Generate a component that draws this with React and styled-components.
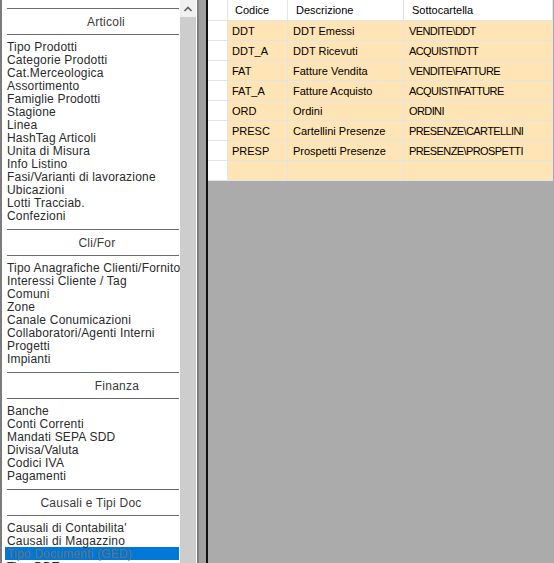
import React from 'react';
import styled, { createGlobalStyle } from 'styled-components';

const GlobalStyle = createGlobalStyle`
    html, body {
        margin: 0;
        padding: 0;
        overflow: hidden;
        background: #ababab;
    }
    body {
        font-family: "Liberation Sans", Arial, sans-serif;
    }
`;

const Window = styled.div`
    display: flex;
    width: 554px;
    height: 563px;
    overflow: hidden;
`;

const Sidebar = styled.div`
    width: 180px;
    flex-shrink: 0;
    box-sizing: border-box;
    background: #fff;
    border-left: 2px solid #7c7c7c;
    padding: 1px 1px 0 5px;
    overflow: hidden;
`;

const SectionHead = styled.div`
    margin-top: 7px;
    margin-bottom: 5px;
    height: 25px;
    border-top: 1px solid #6a6a6a;
    border-bottom: 1px solid #6a6a6a;
    display: flex;
    align-items: center;
    justify-content: center;
    padding-left: ${p => Math.max(p.shift, 0) * 2}px;
    padding-right: ${p => Math.max(-p.shift, 0) * 2}px;
    font-size: 12px;
    letter-spacing: 0.25px;
    color: #3a3a3a;
`;

const Item = styled.div`
    height: 13px;
    line-height: 14px;
    font-size: 12px;
    letter-spacing: 0.2px;
    white-space: nowrap;
    margin-left: -2px;
    padding-left: 2px;
    color: ${p => (p.selected ? '#6f6f6f' : '#2a2a2a')};
    background: ${p => (p.selected ? '#0078d7' : 'transparent')};
`;

const ScrollBar = styled.div`
    width: 16px;
    flex-shrink: 0;
    background: #cdcdcd;
`;

const ScrollButton = styled.div`
    height: 17px;
    background: #f0f0f0;
    display: flex;
    align-items: center;
    justify-content: center;
`;

const Splitter = styled.div`
    width: 12px;
    flex-shrink: 0;
    background: linear-gradient(
        to right,
        #fff 0 1px,
        #7e7e7e 1px 3px,
        #a0a0a0 3px 10px,
        #111 10px 12px
    );
`;

const GridArea = styled.div`
    flex: 1;
    background: #ababab;
    overflow: hidden;
`;

const Grid = styled.div`
    display: grid;
    grid-template-columns: 19px 59px 115px 148px;
    grid-template-rows: 20px repeat(8, 19px);
    gap: 1px;
    padding: 0 1px 1px 0;
    width: max-content;
    background: #e4e4e4;
`;

const HeadCell = styled.div`
    background: #fff;
    display: flex;
    align-items: center;
    padding-left: ${p => p.pad}px;
    font-size: 11px;
    color: #000;
`;

const IndicatorCell = styled.div`
    background: #fff;
`;

const Cell = styled.div`
    background: #ffe4b5;
    display: flex;
    align-items: center;
    padding-left: ${p => p.pad}px;
    font-size: 11px;
    letter-spacing: ${p => (p.narrow ? '-0.6px' : '0')};
    color: #000;
    white-space: nowrap;
    overflow: hidden;
`;

const sections = [
    {
        title: 'Articoli', shift: 13,
        items: ['Tipo Prodotti', 'Categorie Prodotti', 'Cat.Merceologica', 'Assortimento', 'Famiglie Prodotti',
            'Stagione', 'Linea', 'HashTag Articoli', 'Unita di Misura', 'Info Listino',
            'Fasi/Varianti di lavorazione', 'Ubicazioni', 'Lotti Tracciab.', 'Confezioni'],
    },
    {
        title: 'Cli/For', shift: 4,
        items: ['Tipo Anagrafiche Clienti/Fornitori', 'Interessi Cliente / Tag', 'Comuni', 'Zone',
            'Canale Conumicazioni', 'Collaboratori/Agenti Interni', 'Progetti', 'Impianti'],
    },
    {
        title: 'Finanza', shift: 24,
        items: ['Banche', 'Conti Correnti', 'Mandati SEPA SDD', 'Divisa/Valuta', 'Codici IVA', 'Pagamenti'],
    },
    {
        title: 'Causali e Tipi Doc', shift: -2,
        items: ["Causali di Contabilita'", 'Causali di Magazzino', 'Tipo Documenti (GED)', 'Tipo DDT'],
    },
];

const rows = [
    ['DDT', 'DDT Emessi', 'VENDITE\\DDT'],
    ['DDT_A', 'DDT Ricevuti', 'ACQUISTI\\DTT'],
    ['FAT', 'Fatture Vendita', 'VENDITE\\FATTURE'],
    ['FAT_A', 'Fatture Acquisto', 'ACQUISTI\\FATTURE'],
    ['ORD', 'Ordini', 'ORDINI'],
    ['PRESC', 'Cartellini Presenze', 'PRESENZE\\CARTELLINI'],
    ['PRESP', 'Prospetti Presenze', 'PRESENZE\\PROSPETTI'],
    ['', '', ''],
];

const App = () => {
    return (
        <>
            <GlobalStyle />
            <Window>
                <Sidebar>
                    {sections.map(sec => (
                        <div key={sec.title}>
                            <SectionHead shift={sec.shift}>{sec.title}</SectionHead>
                            {sec.items.map(it => (
                                <Item key={it} selected={it === 'Tipo Documenti (GED)'}>{it}</Item>
                            ))}
                        </div>
                    ))}
                </Sidebar>
                <ScrollBar>
                    <ScrollButton>
                        <svg width="16" height="17" viewBox="0 0 16 17">
                            <polyline points="4.5,11 8,7.5 11.5,11" fill="none" stroke="#606060" strokeWidth="1.6" />
                        </svg>
                    </ScrollButton>
                </ScrollBar>
                <Splitter />
                <GridArea>
                    <Grid>
                        <IndicatorCell />
                        <HeadCell pad={7}>Codice</HeadCell>
                        <HeadCell pad={8}>Descrizione</HeadCell>
                        <HeadCell pad={8}>Sottocartella</HeadCell>
                        {rows.map((r, i) => (
                            <React.Fragment key={i}>
                                <IndicatorCell />
                                <Cell pad={4}>{r[0]}</Cell>
                                <Cell pad={5}>{r[1]}</Cell>
                                <Cell pad={5} narrow>{r[2]}</Cell>
                            </React.Fragment>
                        ))}
                    </Grid>
                </GridArea>
            </Window>
        </>
    );
};

export default App;
